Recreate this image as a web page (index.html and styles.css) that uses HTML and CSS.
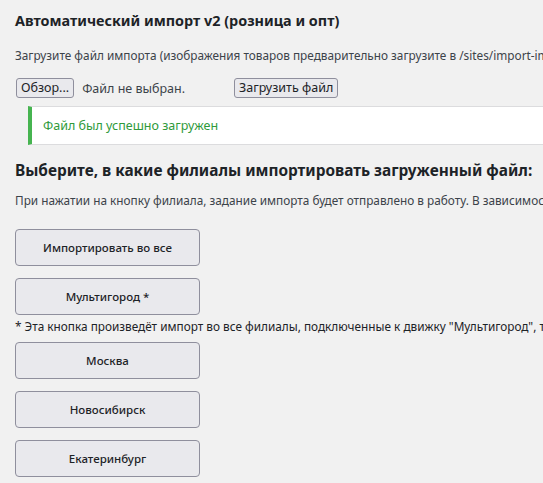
FILE: index.html
```html
<!DOCTYPE html>
<html lang="ru">
<head>
<meta charset="utf-8">
<title>Автоматический импорт v2</title>
<link rel="stylesheet" href="styles.css">
</head>
<body>
<div class="wrap">
  <h1 class="title">Автоматический импорт v2 (розница и опт)</h1>
  <p class="desc">Загрузите файл импорта (изображения товаров предварительно загрузите в /sites/import-images/ через FTP)</p>
  <form class="upload-row">
    <span class="file-input">
      <span class="btn-small">Обзор...</span>
      <span class="file-label">Файл не выбран.</span>
    </span>
    <span class="btn-small">Загрузить файл</span>
  </form>
  <div class="notice">
    <p>Файл был успешно загружен</p>
  </div>
  <h2 class="subtitle">Выберите, в какие филиалы импортировать загруженный файл:</h2>
  <p class="desc desc-2">При нажатии на кнопку филиала, задание импорта будет отправлено в работу. В зависимости от размера файла это может занять некоторое время.</p>
  <div class="branches">
    <button class="branch" type="button">Импортировать во все</button>
    <button class="branch" type="button">Мультигород *</button>
    <p class="footnote">* Эта кнопка произведёт импорт во все филиалы, подключенные к движку "Мультигород", т.е. во все города сайта</p>
    <button class="branch" type="button">Москва</button>
    <button class="branch" type="button">Новосибирск</button>
    <button class="branch" type="button">Екатеринбург</button>
  </div>
</div>
</body>
</html>
```

FILE: styles.css
```css
html, body {
  margin: 0;
  padding: 0;
  background: #f1f1f1;
  overflow: hidden;
}
body {
  font-family: "Noto Sans", "Open Sans", sans-serif;
  color: #3c434a;
  width: 543px;
  height: 483px;
}
.wrap {
  padding: 12px 0 0 15px;
  white-space: nowrap;
}
.title {
  margin: 0;
  font-size: 14.4px;
  line-height: 18px;
  font-weight: 700;
  color: #1d2327;
}
.desc {
  margin: 17px 0 0;
  font-size: 11.8px;
  line-height: 16px;
  color: #3c434a;
}
.upload-row {
  display: flex;
  align-items: center;
  margin-top: 14px;
  height: 22px;
}
.file-input {
  display: flex;
  align-items: center;
  gap: 8px;
  width: 218px;
  margin-left: 1px;
}
.btn-small {
  display: inline-block;
  font-size: 12.5px;
  line-height: 18px;
  padding: 0 4px;
  border: 1px solid #8f8f9d;
  border-radius: 3px;
  background: #e9e9ed;
  color: #1d2327;
}
.file-label {
  font-size: 12.5px;
  color: #3c434a;
}
.notice {
  margin: 7px 0 0 13px;
  background: #fff;
  border: 1px solid #dcdcde;
  border-left: 4px solid #46b450;
  border-right: none;
  height: 37px;
  display: flex;
  align-items: center;
  padding-left: 11px;
}
.notice p {
  margin: 0;
  font-size: 12.5px;
  color: #2f9a3b;
}
.subtitle {
  margin: 17px 0 0;
  font-size: 15.4px;
  line-height: 18px;
  font-weight: 700;
  color: #1d2327;
}
.desc-2 {
  margin-top: 12px;
}
.branches {
  display: flex;
  flex-direction: column;
  align-items: flex-start;
  gap: 12px;
  margin-top: 21px;
}
.branch {
  width: 185px;
  height: 37px;
  margin: 0;
  padding: 0;
  font-family: inherit;
  font-size: 11.5px;
  font-weight: 500;
  color: #1d2327;
  background: #e9e9ed;
  border: 1px solid #8f8f9d;
  border-radius: 4px;
}
.footnote {
  margin: -8px 0 -4px;
  font-size: 11.8px;
  line-height: 15px;
  color: #1d2327;
}
```
